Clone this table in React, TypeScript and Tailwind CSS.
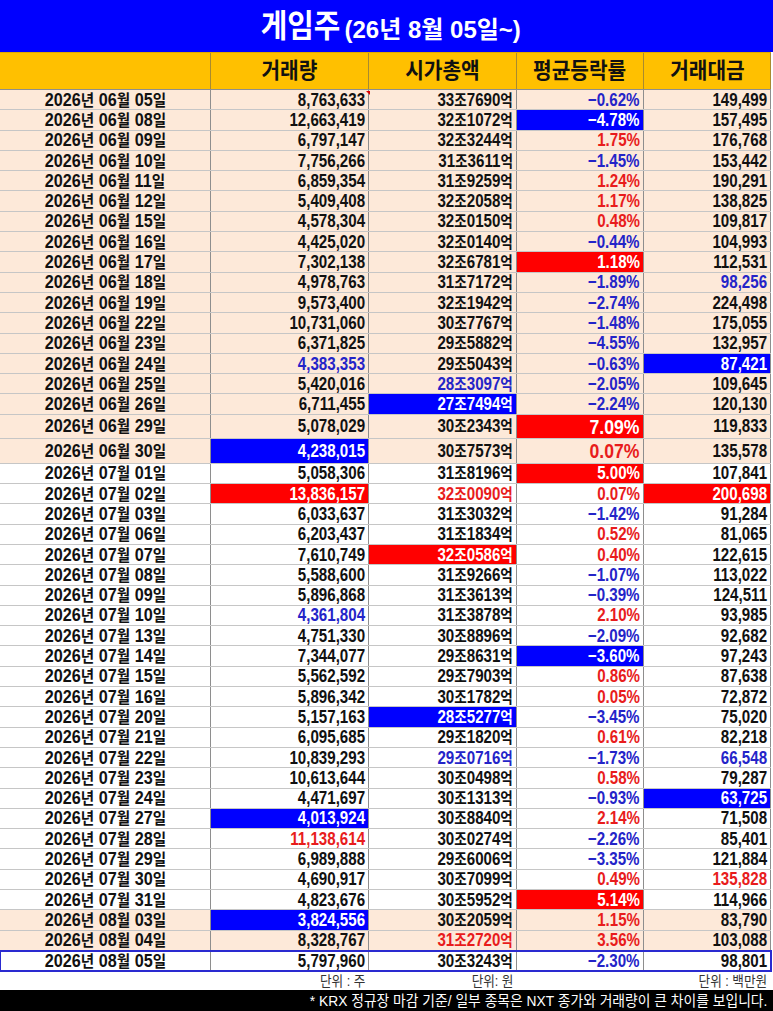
import React from "react";

// tone: n = plain, b = blue text, r = red text, B = blue fill, R = red fill
type Tone = "n" | "b" | "r" | "B" | "R";

interface Row {
  date: string;
  vol: string;
  volT?: Tone;
  cap: string;
  capT?: Tone;
  pct: string;
  pctT: Tone;
  amt: string;
  amtT?: Tone;
  peach?: boolean;
  tall?: "a" | "b";
  last?: boolean;
}

const rows: Row[] = [
  { date: "2026년 06월 05일", vol: "8,763,633", cap: "33조7690억", pct: "-0.62%", pctT: "b", amt: "149,499", peach: true },
  { date: "2026년 06월 08일", vol: "12,663,419", cap: "32조1072억", pct: "-4.78%", pctT: "B", amt: "157,495", peach: true },
  { date: "2026년 06월 09일", vol: "6,797,147", cap: "32조3244억", pct: "1.75%", pctT: "r", amt: "176,768", peach: true },
  { date: "2026년 06월 10일", vol: "7,756,266", cap: "31조3611억", pct: "-1.45%", pctT: "b", amt: "153,442", peach: true },
  { date: "2026년 06월 11일", vol: "6,859,354", cap: "31조9259억", pct: "1.24%", pctT: "r", amt: "190,291", peach: true },
  { date: "2026년 06월 12일", vol: "5,409,408", cap: "32조2058억", pct: "1.17%", pctT: "r", amt: "138,825", peach: true },
  { date: "2026년 06월 15일", vol: "4,578,304", cap: "32조0150억", pct: "0.48%", pctT: "r", amt: "109,817", peach: true },
  { date: "2026년 06월 16일", vol: "4,425,020", cap: "32조0140억", pct: "-0.44%", pctT: "b", amt: "104,993", peach: true },
  { date: "2026년 06월 17일", vol: "7,302,138", cap: "32조6781억", pct: "1.18%", pctT: "R", amt: "112,531", peach: true },
  { date: "2026년 06월 18일", vol: "4,978,763", cap: "31조7172억", pct: "-1.89%", pctT: "b", amt: "98,256", amtT: "b", peach: true },
  { date: "2026년 06월 19일", vol: "9,573,400", cap: "32조1942억", pct: "-2.74%", pctT: "b", amt: "224,498", peach: true },
  { date: "2026년 06월 22일", vol: "10,731,060", cap: "30조7767억", pct: "-1.48%", pctT: "b", amt: "175,055", peach: true },
  { date: "2026년 06월 23일", vol: "6,371,825", cap: "29조5882억", pct: "-4.55%", pctT: "b", amt: "132,957", peach: true },
  { date: "2026년 06월 24일", vol: "4,383,353", volT: "b", cap: "29조5043억", pct: "-0.63%", pctT: "b", amt: "87,421", amtT: "B", peach: true },
  { date: "2026년 06월 25일", vol: "5,420,016", cap: "28조3097억", capT: "b", pct: "-2.05%", pctT: "b", amt: "109,645", peach: true },
  { date: "2026년 06월 26일", vol: "6,711,455", cap: "27조7494억", capT: "B", pct: "-2.24%", pctT: "b", amt: "120,130", peach: true },
  { date: "2026년 06월 29일", vol: "5,078,029", cap: "30조2343억", pct: "7.09%", pctT: "R", amt: "119,833", peach: true, tall: "a" },
  { date: "2026년 06월 30일", vol: "4,238,015", volT: "B", cap: "30조7573억", pct: "0.07%", pctT: "r", amt: "135,578", peach: true, tall: "b" },
  { date: "2026년 07월 01일", vol: "5,058,306", cap: "31조8196억", pct: "5.00%", pctT: "R", amt: "107,841" },
  { date: "2026년 07월 02일", vol: "13,836,157", volT: "R", cap: "32조0090억", capT: "r", pct: "0.07%", pctT: "r", amt: "200,698", amtT: "R" },
  { date: "2026년 07월 03일", vol: "6,033,637", cap: "31조3032억", pct: "-1.42%", pctT: "b", amt: "91,284" },
  { date: "2026년 07월 06일", vol: "6,203,437", cap: "31조1834억", pct: "0.52%", pctT: "r", amt: "81,065" },
  { date: "2026년 07월 07일", vol: "7,610,749", cap: "32조0586억", capT: "R", pct: "0.40%", pctT: "r", amt: "122,615" },
  { date: "2026년 07월 08일", vol: "5,588,600", cap: "31조9266억", pct: "-1.07%", pctT: "b", amt: "113,022" },
  { date: "2026년 07월 09일", vol: "5,896,868", cap: "31조3613억", pct: "-0.39%", pctT: "b", amt: "124,511" },
  { date: "2026년 07월 10일", vol: "4,361,804", volT: "b", cap: "31조3878억", pct: "2.10%", pctT: "r", amt: "93,985" },
  { date: "2026년 07월 13일", vol: "4,751,330", cap: "30조8896억", pct: "-2.09%", pctT: "b", amt: "92,682" },
  { date: "2026년 07월 14일", vol: "7,344,077", cap: "29조8631억", pct: "-3.60%", pctT: "B", amt: "97,243" },
  { date: "2026년 07월 15일", vol: "5,562,592", cap: "29조7903억", pct: "0.86%", pctT: "r", amt: "87,638" },
  { date: "2026년 07월 16일", vol: "5,896,342", cap: "30조1782억", pct: "0.05%", pctT: "r", amt: "72,872" },
  { date: "2026년 07월 20일", vol: "5,157,163", cap: "28조5277억", capT: "B", pct: "-3.45%", pctT: "b", amt: "75,020" },
  { date: "2026년 07월 21일", vol: "6,095,685", cap: "29조1820억", pct: "0.61%", pctT: "r", amt: "82,218" },
  { date: "2026년 07월 22일", vol: "10,839,293", cap: "29조0716억", capT: "b", pct: "-1.73%", pctT: "b", amt: "66,548", amtT: "b" },
  { date: "2026년 07월 23일", vol: "10,613,644", cap: "30조0498억", pct: "0.58%", pctT: "r", amt: "79,287" },
  { date: "2026년 07월 24일", vol: "4,471,697", cap: "30조1313억", pct: "-0.93%", pctT: "b", amt: "63,725", amtT: "B" },
  { date: "2026년 07월 27일", vol: "4,013,924", volT: "B", cap: "30조8840억", pct: "2.14%", pctT: "r", amt: "71,508" },
  { date: "2026년 07월 28일", vol: "11,138,614", volT: "r", cap: "30조0274억", pct: "-2.26%", pctT: "b", amt: "85,401" },
  { date: "2026년 07월 29일", vol: "6,989,888", cap: "29조6006억", pct: "-3.35%", pctT: "b", amt: "121,884" },
  { date: "2026년 07월 30일", vol: "4,690,917", cap: "30조7099억", pct: "0.49%", pctT: "r", amt: "135,828", amtT: "r" },
  { date: "2026년 07월 31일", vol: "4,823,676", cap: "30조5952억", pct: "5.14%", pctT: "R", amt: "114,966" },
  { date: "2026년 08월 03일", vol: "3,824,556", volT: "B", cap: "30조2059억", pct: "1.15%", pctT: "r", amt: "83,790", peach: true },
  { date: "2026년 08월 04일", vol: "8,328,767", cap: "31조2720억", capT: "r", pct: "3.56%", pctT: "r", amt: "103,088", peach: true },
  { date: "2026년 08월 05일", vol: "5,797,960", cap: "30조3243억", pct: "-2.30%", pctT: "b", amt: "98,801", last: true },
];

const font = { fontFamily: '"Liberation Sans", "Noto Sans CJK KR", sans-serif' };

const toneClass = (t: Tone = "n") => {
  switch (t) {
    case "b":
      return "text-[#2424c8]";
    case "r":
      return "text-[#e81c1c]";
    case "B":
      return "bg-[#0000ff] text-white";
    case "R":
      return "bg-[#ff0000] text-white";
    default:
      return "text-[#111111]";
  }
};

// hangul runs a touch smaller so they sit level with the digits
const Mixed = ({ text }: { text: string }) => (
  <>
    {text.split(/([가-힣]+)/).map((part, i) =>
      /[가-힣]/.test(part) ? (
        <span key={i} className="text-[0.9em]">{part}</span>
      ) : (
        part
      )
    )}
  </>
);

const Num = ({ value, tone, big }: { value: string; tone?: Tone; big?: boolean }) => (
  <div className={`flex items-center justify-end pr-[3px] border-r border-[#8e8e8e] ${toneClass(tone)}`}>
    <span className={`inline-block origin-right scale-x-[0.84] font-bold leading-none whitespace-nowrap ${big ? "text-[21px]" : "text-[18px]"}`}>
      <Mixed text={value.replace("-", "−")} />
    </span>
  </div>
);

const TableRow = ({ row }: { row: Row }) => {
  const height = row.tall === "a" ? "h-[24px]" : row.tall === "b" ? "h-[25px]" : "h-[20.3px]";
  const bg = row.peach ? "bg-[#fde9d9]" : "bg-white";
  const edge = row.last ? "outline-2 outline-[#2a2ad0] -outline-offset-1" : "";
  return (
    <div className={`grid grid-cols-[211px_158px_148px_127px_127px] border-b border-[#c6c6c6] ${height} ${bg} ${edge}`}>
      <div className="flex items-center justify-center border-r border-[#8e8e8e] text-[#111111]">
        <span className="inline-block scale-x-[0.9] text-[18px] font-bold leading-none whitespace-nowrap">
          <Mixed text={row.date} />
        </span>
      </div>
      <Num value={row.vol} tone={row.volT} />
      <Num value={row.cap} tone={row.capT} />
      <Num value={row.pct} tone={row.pctT} big={!!row.tall} />
      <Num value={row.amt} tone={row.amtT} />
    </div>
  );
};

const headers = ["거래량", "시가총액", "평균등락률", "거래대금"];

export default function App() {
  return (
    <div className="w-[773px] h-[1011px] bg-white overflow-hidden" style={font}>
      <div className="h-[52px] bg-[#0000ff] flex items-center justify-center gap-[4px] text-white">
        <span className="inline-block origin-right scale-x-[0.9] text-[32px] font-bold leading-none">게임주</span>
        <span className="inline-block origin-left text-[24px] font-bold leading-none mt-[7px] whitespace-nowrap">
          (26년 8월 05일~)
        </span>
      </div>
      <div className="w-[771px]">
        <div className="grid grid-cols-[211px_158px_148px_127px_127px] h-[38px] bg-[#ffc000] border-t border-[#e0a800] border-b border-b-[#8e8e8e]">
          <div className="border-r border-[#a88a30]" />
          {headers.map(h => (
            <div key={h} className="flex items-center justify-center border-r border-[#a88a30] text-[#111111]">
              <span className="inline-block scale-x-[0.92] text-[22px] font-bold leading-none">{h}</span>
            </div>
          ))}
        </div>
        <div className="relative">
          {rows.map(r => (
            <TableRow key={r.date} row={r} />
          ))}
          <div className="absolute left-[366px] top-[1px] h-0 w-0 border-l-[4px] border-l-transparent border-t-[4px] border-t-[#e00000]" />
        </div>
        <div className="grid grid-cols-[211px_158px_148px_127px_127px] h-[19px] text-[#333333]">
          <div />
          <div className="flex items-center justify-end pr-[4px]">
            <span className="inline-block origin-right scale-x-[0.9] text-[14px] leading-none whitespace-nowrap">단위 : 주</span>
          </div>
          <div className="flex items-center justify-end pr-[4px]">
            <span className="inline-block origin-right scale-x-[0.9] text-[14px] leading-none whitespace-nowrap">단위: 원</span>
          </div>
          <div />
          <div className="flex items-center justify-end pr-[4px]">
            <span className="inline-block origin-right scale-x-[0.9] text-[14px] leading-none whitespace-nowrap">단위 : 백만원</span>
          </div>
        </div>
      </div>
      <div className="h-[21px] bg-black flex items-center justify-end pr-[6px] text-white">
        <span className="inline-block origin-right scale-x-[0.92] text-[15px] leading-none whitespace-nowrap">
          * KRX 정규장 마감 기준/ 일부 종목은 NXT 종가와 거래량이 큰 차이를 보입니다.
        </span>
      </div>
    </div>
  );
}
